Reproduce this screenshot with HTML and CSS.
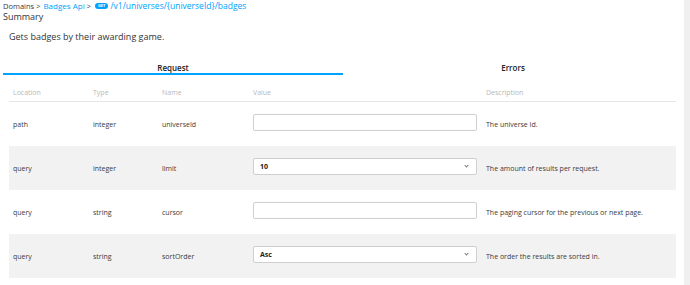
FILE: index.html
```html
<!DOCTYPE html>
<html lang="en">
<head>
    <meta charset="UTF-8">
    <title>Badges Api</title>
    <link rel="stylesheet" href="styles.css">
</head>
<body>
    <div class="page">
        <div class="content">
            <div class="breadcrumb">
                <span>Domains</span><span class="sep">&gt;</span>
                <a href="#">Badges Api</a><span class="sep">&gt;</span>
                <span class="verb">GET</span><a href="#" class="path">/v1/universes/{universeId}/badges</a>
            </div>
            <h3 class="title">Summary</h3>
            <p class="summary">Gets badges by their awarding game.</p>

            <div class="tabs">
                <div class="tab active">Request</div>
                <div class="tab">Errors</div>
            </div>

            <table class="params">
                <thead>
                    <tr>
                        <th class="col-loc">Location</th>
                        <th class="col-type">Type</th>
                        <th class="col-name">Name</th>
                        <th class="col-value">Value</th>
                        <th>Description</th>
                    </tr>
                </thead>
                <tbody>
                    <tr>
                        <td>path</td>
                        <td>integer</td>
                        <td>universeId</td>
                        <td><input type="text" class="field"></td>
                        <td>The universe Id.</td>
                    </tr>
                    <tr class="alt">
                        <td>query</td>
                        <td>integer</td>
                        <td>limit</td>
                        <td><div class="field select">10<span class="caret"></span></div></td>
                        <td>The amount of results per request.</td>
                    </tr>
                    <tr>
                        <td>query</td>
                        <td>string</td>
                        <td>cursor</td>
                        <td><input type="text" class="field"></td>
                        <td>The paging cursor for the previous or next page.</td>
                    </tr>
                    <tr class="alt">
                        <td>query</td>
                        <td>string</td>
                        <td>sortOrder</td>
                        <td><div class="field select">Asc<span class="caret"></span></div></td>
                        <td>The order the results are sorted in.</td>
                    </tr>
                </tbody>
            </table>
        </div>
        <div class="scrollbar"></div>
    </div>
</body>
</html>
```
FILE: styles.css
```css
html, body {
    margin: 0;
    height: 100%;
}
body {
    font-family: "Open Sans", Arial, sans-serif;
    color: #393b3d;
    background-color: #fff;
}
.page {
    display: flex;
    height: 100%;
}
.content {
    flex: 1;
    padding: 0 1px 0 3px;
}
.scrollbar {
    width: 6px;
    background-color: #f0f0f0;
}
.breadcrumb {
    font-size: 7.5px;
    line-height: 12px;
    display: flex;
    align-items: center;
}
.breadcrumb a {
    color: #00a2ff;
    text-decoration: none;
    font-size: 8px;
}
.breadcrumb a.path {
    font-size: 8.5px;
}
.breadcrumb .sep {
    margin: 0 3px 0 2px;
}
.verb {
    background-color: #00a2ff;
    color: #fff;
    font-size: 4px;
    font-weight: bold;
    line-height: 6px;
    padding: 0 3px;
    border-radius: 3px;
    margin: 0 2px 0 1px;
}
.title {
    font-size: 9px;
    font-weight: normal;
    margin: 0;
    line-height: 10px;
    color: #333;
}
.summary {
    font-size: 9px;
    margin: 9px 0 0 6px;
    line-height: 12px;
    color: #333;
}
.tabs {
    display: flex;
    margin-top: 19px;
}
.tab {
    flex: 1;
    text-align: center;
    font-size: 8px;
    font-weight: 600;
    line-height: 11px;
    color: #222;
    border-bottom: 2px solid transparent;
}
.tab.active {
    border-bottom-color: #00a2ff;
}
.params {
    margin: 13px 0 0 6px;
    width: 667px;
    border-collapse: collapse;
    font-size: 7px;
}
.params th {
    text-align: left;
    font-weight: normal;
    color: #b8b8b8;
    line-height: 10px;
    padding: 0 4px 3px;
    border-bottom: 1px solid #e6e6e6;
}
.col-loc { width: 72px; }
.col-type { width: 61px; }
.col-name { width: 83px; }
.col-value { width: 225px; }
.params td {
    height: 44px;
    padding: 0 4px;
    color: #393b3d;
}
.params tr.alt td {
    background-color: #f2f2f2;
}
.field {
    box-sizing: border-box;
    display: block;
    width: 224px;
    height: 17px;
    margin: 0 0 3px;
    border: 1px solid #cfcfcf;
    border-radius: 2px;
    background-color: #fff;
    font-family: inherit;
    font-size: 7px;
}
.select {
    position: relative;
    font-weight: bold;
    padding: 0 6px;
    line-height: 15px;
    color: #191919;
}
.caret {
    position: absolute;
    right: 8px;
    top: 5px;
    width: 2px;
    height: 2px;
    border-right: 1px solid #777;
    border-bottom: 1px solid #777;
    transform: rotate(45deg);
}
```
